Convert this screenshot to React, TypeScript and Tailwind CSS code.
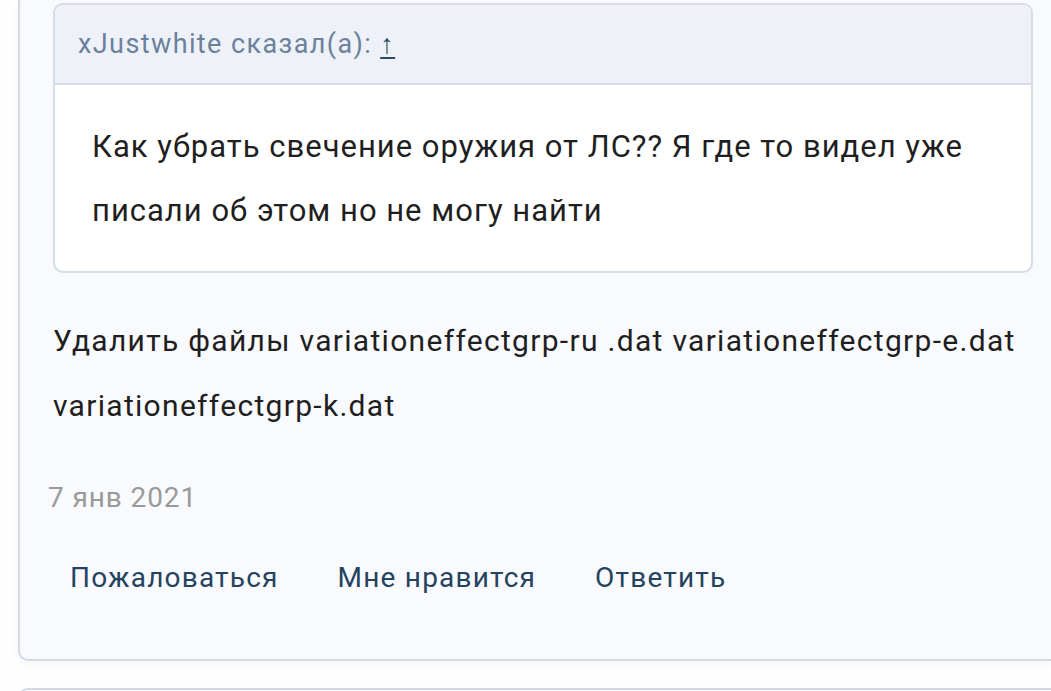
import React from 'react';

const font = { fontFamily: 'Roboto, "Noto Sans", sans-serif' };

export default function App() {
  return (
    <div className="w-[1051px] h-[691px] overflow-hidden bg-[#fefefe]" style={font}>
      {/* Post card (top is scrolled off) */}
      <div className="ml-[18px] h-[661px] border-l-2 border-b-2 border-[#cfdae4] rounded-bl-[10px] bg-[#f9fafd] pl-[33px] pt-[3px] shadow-[0_4px_8px_rgba(0,0,0,0.03)]">
        {/* Quote */}
        <div className="mr-[18px] border-2 border-[#d3dee8] rounded-[10px] overflow-hidden bg-white">
          <div className="h-[80px] bg-[#eef2f8] border-b-2 border-[#d3dee8] pl-[23px] flex items-center text-[27px] tracking-[1.4px] text-[#6b819c]">
            <span>xJustwhite сказал(а):</span>
            <span className="ml-[8px] text-[#2b4a66] underline underline-offset-4">↑</span>
          </div>
          <div className="pl-[37px] pr-[20px] pt-[30px] pb-[28px] text-[31px] tracking-[1px] leading-[64px] text-[#1f1f1f]">
            Как убрать свечение оружия от ЛС?? Я где то видел уже писали об этом но не могу найти
          </div>
        </div>

        {/* Message */}
        <div className="mt-[35px] pr-[18px] text-[30px] tracking-[1.3px] leading-[65px] text-[#1f1f1f]">
          Удалить файлы variationeffectgrp-ru .dat variationeffectgrp-e.dat variationeffectgrp-k.dat
        </div>

        {/* Date */}
        <div className="mt-[40px] -ml-[5px] text-[28px] tracking-[0.9px] leading-[40px] text-[#9a9a9a]">7 янв 2021</div>

        {/* Actions */}
        <div className="mt-[40px] ml-[17px] flex gap-[59px] text-[28px] tracking-[1.2px] leading-[40px] text-[#24435e]">
          <span>Пожаловаться</span>
          <span>Мне нравится</span>
          <span>Ответить</span>
        </div>
      </div>

      {/* Next card */}
      <div className="mt-[27px] ml-[18px] h-[40px] border-l-2 border-t-2 border-[#cfdae4] rounded-tl-[10px] bg-[#f9fafd]" />
    </div>
  );
}
